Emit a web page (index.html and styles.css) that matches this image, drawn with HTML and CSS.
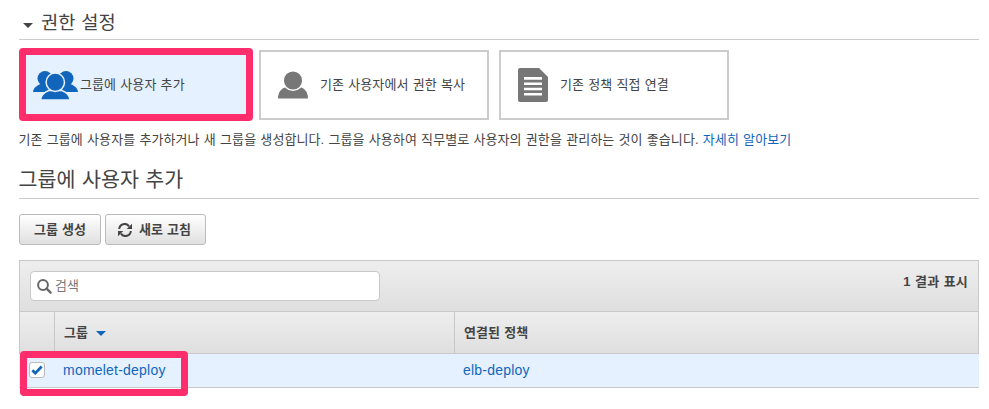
FILE: index.html
```html
<!DOCTYPE html>
<html lang="ko">
<head>
<meta charset="utf-8">
<title>권한 설정</title>
<link rel="stylesheet" href="styles.css">
</head>
<body>
<main class="page">
  <h2 class="section-title"><span class="caret"></span><span>권한 설정</span></h2>
  <div class="cards">
    <div class="card selected">
      <svg class="icon-group" width="46" height="30" viewBox="0 0 46 30">
        <g fill="#1166bb">
          <circle cx="12" cy="8.5" r="7.500"/><path d="M0 22c.5-4 3.500-6.500 8-8h8v8z"/>
          <circle cx="33" cy="8.500" r="7.500"/><path d="M45 22c-.5-4-3.500-6.500-8-8h-8v8z"/>
        </g>
        <g fill="#1166bb" stroke="#e5f1ff" stroke-width="1.500">
          <path d="M7.500 30c.5-5.500 4-8 8.300-9.500h13c4.300 1.500 7.800 4 8.300 9.500z"/>
          <circle cx="22.300" cy="12.300" r="9.200"/>
        </g>
      </svg>
      <span>그룹에 사용자 추가</span>
      <div class="mark mark-card"></div>
    </div>
    <div class="card">
      <svg class="icon" width="30" height="34" viewBox="0 0 30 34">
        <path fill="#777" d="M0 30.500c0-6 3-10 8-11.500h14c5 1.500 8 5.500 8 11.500z"/>
        <circle cx="15" cy="12.500" r="9.800" fill="#777" stroke="#fff" stroke-width="1.500"/>
      </svg>
      <span>기존 사용자에서 권한 복사</span>
    </div>
    <div class="card">
      <svg class="icon" width="30" height="34" viewBox="0 0 30 34">
        <path fill="#777" d="M2 0h19l9 9v23a2 2 0 0 1-2 2H2a2 2 0 0 1-2-2V2a2 2 0 0 1 2-2z"/>
        <path stroke="#fff" stroke-width="2.600" d="M6 10.400h18M6 15.700h18M6 21h18M6 26.300h18"/>
      </svg>
      <span>기존 정책 직접 연결</span>
    </div>
  </div>
  <p class="description">기존 그룹에 사용자를 추가하거나 새 그룹을 생성합니다. 그룹을 사용하여 직무별로 사용자의 권한을 관리하는 것이 좋습니다. <a href="#">자세히 알아보기</a></p>
  <h3 class="subtitle">그룹에 사용자 추가</h3>
  <div class="buttons">
    <button class="btn btn-create" type="button">그룹 생성</button>
    <button class="btn btn-refresh" type="button">
      <svg width="14" height="14" viewBox="0 0 14 14">
        <path d="M1.200 6A5.400 5.400 0 0 1 11 3.300M12.800 8A5.400 5.400 0 0 1 3 10.700" fill="none" stroke="#444" stroke-width="2"/>
        <path d="M14 .7v5.300H8.700zM0 13.300V8h5.300z" fill="#444"/>
      </svg>
      <span>새로 고침</span>
    </button>
  </div>
  <section class="table">
    <div class="toolbar">
      <label class="search">
        <svg width="15" height="15" viewBox="0 0 15 15"><circle cx="6" cy="6" r="4.900" fill="none" stroke="#666" stroke-width="2"/><path d="M9.600 9.600l4 4" stroke="#666" stroke-width="2.300" stroke-linecap="round"/></svg>
        <span>검색</span>
      </label>
      <span class="count">1 결과 표시</span>
    </div>
    <div class="row head">
      <div class="cell"></div>
      <div class="cell">그룹<span class="sort"></span></div>
      <div class="cell">연결된 정책</div>
    </div>
    <div class="row item">
      <div class="cell check-cell">
        <span class="checkbox"><svg width="12" height="10" viewBox="0 0 12 10"><path d="M1.300 5.200l3 3L10.700 1.500" fill="none" stroke="#1166bb" stroke-width="2.700"/></svg></span>
      </div>
      <div class="cell"><a href="#">momelet-deploy</a></div>
      <div class="cell"><a href="#">elb-deploy</a></div>
      <div class="mark mark-row"></div>
    </div>
  </section>
</main>
</body>
</html>
```
FILE: styles.css
```css
* { box-sizing: border-box; }
body {
  margin: 0;
  background: #fff;
  color: #444;
  font: 13px/20px "Liberation Sans", "Noto Sans CJK KR", sans-serif;
  letter-spacing: 0.08px;
  word-spacing: 0.5px;
}
a { color: #1166bb; text-decoration: none; }
.page { width: 960px; min-height: 409px; margin-left: 19px; }
.section-title {
  display: flex;
  align-items: center;
  height: 40px;
  margin: 0;
  padding: 6px 0 0 4px;
  border-bottom: 1px solid #ccc;
  font-size: 18.700px;
  font-weight: 400;
}
.caret {
  margin: 5px 8px 0 0;
  border: 5px solid transparent;
  border-top-color: #444;
  border-bottom: 0;
}
.cards { display: flex; gap: 10px; margin-top: 10px; }
.card {
  position: relative;
  display: flex;
  align-items: center;
  width: 230px;
  height: 70px;
  padding-left: 17px;
  border: 2px solid #ccc;
}
.card.selected { padding-left: 12px; background: #e5f1ff; border-color: #e5f1ff; }
.icon { margin-right: 12px; }
.icon-group { margin-right: 1px; }
.mark {
  position: absolute;
  border: 7px solid #ff2d6c;
  border-radius: 4px;
}
.mark-card { left: -2px; top: -4px; width: 234px; height: 73px; }
.description { margin: 10px 0 0 -0.5px; white-space: nowrap; }
.subtitle {
  height: 49px;
  margin: 0;
  padding-top: 16px;
  border-bottom: 1px solid #ccc;
  font-size: 20.600px;
  line-height: 28px;
  font-weight: 400;
  text-indent: -0.500px;
}
.buttons { display: flex; gap: 4px; margin-top: 15px; }
.btn {
  display: flex;
  align-items: center;
  justify-content: center;
  height: 31px;
  padding: 0;
  border: 1px solid #bbb;
  border-radius: 3px;
  background: linear-gradient(#fff, #e0e0e0);
  color: #444;
  font: inherit;
  font-weight: 700;
  word-spacing: inherit;
}
.btn-create { width: 82px; }
.btn-refresh { width: 101px; gap: 7px; padding-right: 2px; }
.table { margin-top: 15px; }
.toolbar {
  display: flex;
  justify-content: space-between;
  height: 51px;
  padding: 10px 10px 0;
  border: 1px solid #c8c8c8;
  border-bottom: 0;
  background: linear-gradient(#eee, #dfdfdf);
}
.search {
  display: flex;
  align-items: center;
  gap: 3px;
  width: 350px;
  height: 30px;
  padding-left: 6px;
  border: 1px solid #c8c8c8;
  border-radius: 4px;
  background: #fff;
  color: #777;
}
.count { padding-top: 1px; font-weight: 700; letter-spacing: 0.2px; }
.row { display: grid; grid-template-columns: 34px 400px 1fr; }
.cell { display: flex; align-items: center; padding-left: 9px; }
.head {
  height: 43px;
  border: 1px solid #c8c8c8;
  background: linear-gradient(#eee, #dfdfdf);
  font-weight: 700;
}
.head .cell + .cell { border-left: 1px solid #c8c8c8; }
.sort {
  margin: 2px 0 0 8px;
  border: 5px solid transparent;
  border-top-color: #1166bb;
  border-bottom: 0;
}
.item {
  position: relative;
  height: 34px;
  padding-left: 1px;
  border-bottom: 1px solid #c8c8c8;
  background: #e5f1ff;
  font-size: 14px;
  letter-spacing: 0.220px;
}
.item .cell { padding-bottom: 1px; }
.check-cell { padding-left: 9px; }
.checkbox {
  display: flex;
  flex: none;
  align-items: center;
  justify-content: center;
  width: 16px;
  height: 16px;
  border: 1px solid #bbb;
  border-radius: 3px;
  background: #fff;
}
.mark-row { left: 1px; top: -3px; width: 168px; height: 45px; }
```
